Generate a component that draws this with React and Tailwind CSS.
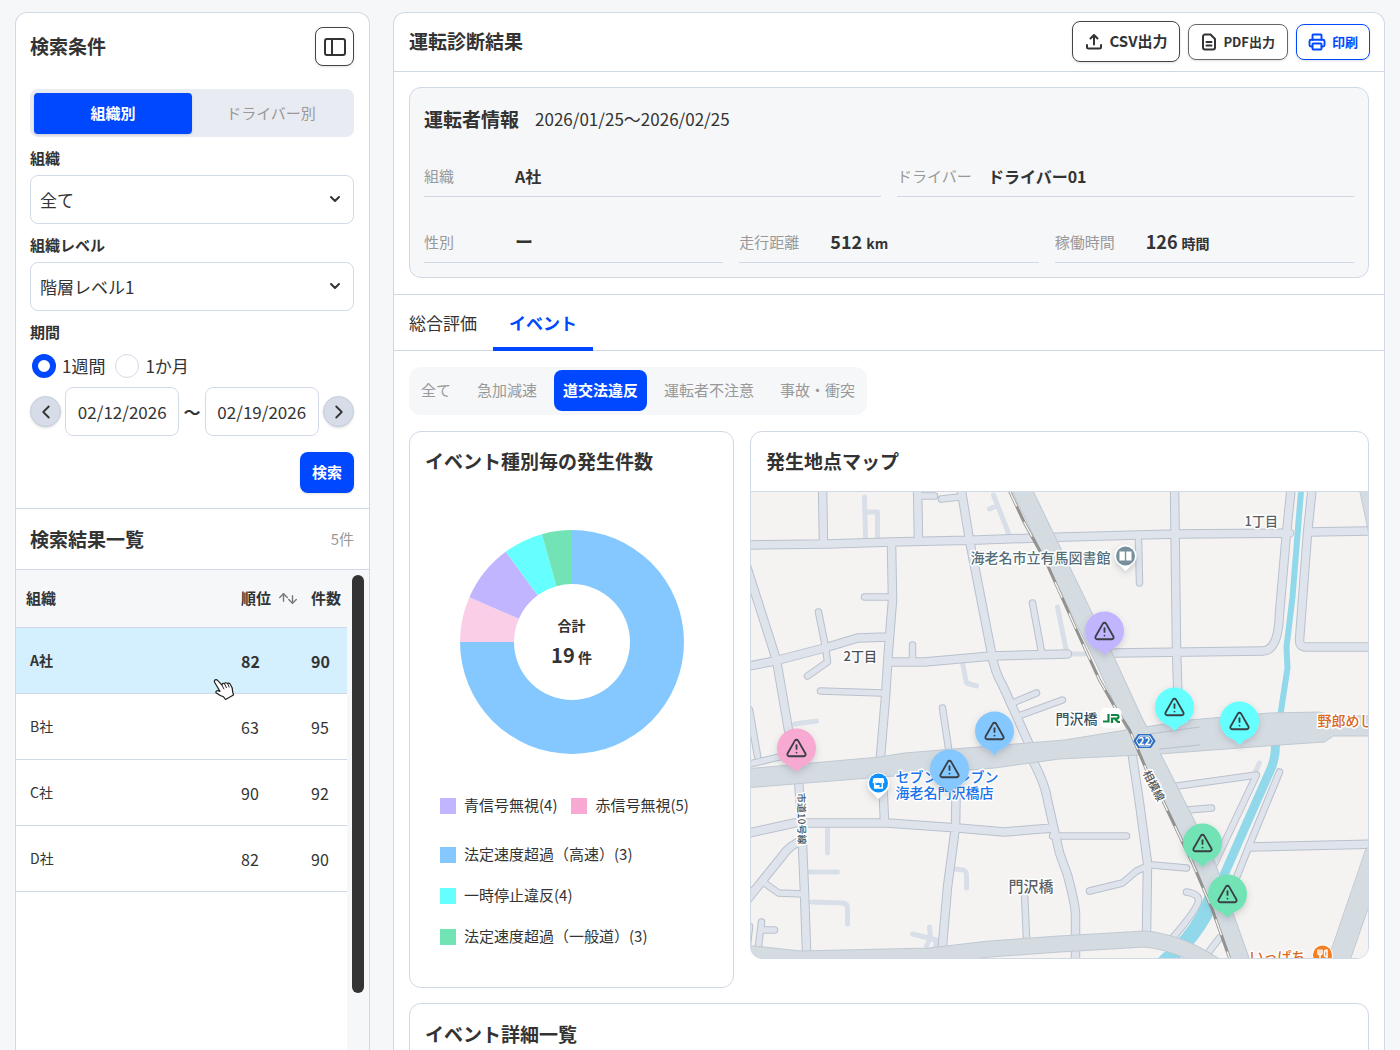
import { useState } from 'react';
import clsx from 'clsx';
import { ArrowDown, ArrowUp, ChevronDown, ChevronLeft, ChevronRight, Printer, TriangleAlert, Utensils } from 'lucide-react';

const companies = [
  { name: 'A社', rank: 82, count: 90 },
  { name: 'B社', rank: 63, count: 95 },
  { name: 'C社', rank: 90, count: 92 },
  { name: 'D社', rank: 82, count: 90 },
];

const filters = ['全て', '急加減速', '道交法違反', '運転者不注意', '事故・衝突'];

const slices = [
  { from: 0, to: 270, color: '#84c8ff' },
  { from: 270, to: 293.6, color: '#f9cee6' },
  { from: 293.6, to: 323.7, color: '#c1b5ff' },
  { from: 323.7, to: 344.4, color: '#66ffff' },
  { from: 344.4, to: 360, color: '#72e3b5' },
];

function slicePath({ from, to }) {
  const point = (deg, r) => {
    const a = ((deg - 90) * Math.PI) / 180;
    return `${112 + r * Math.cos(a)} ${112 + r * Math.sin(a)}`;
  };
  const large = to - from > 180 ? 1 : 0;
  return `M${point(from, 112)} A112 112 0 ${large} 1 ${point(to, 112)} L${point(to, 58)} A58 58 0 ${large} 0 ${point(from, 58)} Z`;
}

const lanes = [
  'M865 497L866 537M866 512H878V538',
  'M994 495L1009 533M990 509L997 506',
  'M1058 607L1067 652',
  'M1068 654H1085',
  'M963 663L967 683L977 686',
  'M828 828V853',
  'M808 872H838',
  'M812 902L844 903Q848 904 848 908V924',
  'M955 869L964 870Q967 871 967 875V888',
  'M913 934L937 940M930 927L931 938L927 946M937 940L936 946',
  'M1254 776L1260 763',
  'M795 724L817 721',
];

const streets = [
  'M865 597H890',
  'M819 612L826 647L828 662L808 676',
  'M821 691L883 693',
  'M913 645V660',
  'M1033 603L1042 652',
  'M943 708L949 748',
  'M1037 693L1013 703',
  'M1063 700L1019 716',
  'M920 496H935',
  'M960 497L942 499',
  'M1139 540L1140 583',
  'M1053 836H1127',
  'M762 922L759 946M761 930H775',
  'M750 929V926L748 945',
  'M1025 893L1027 938',
  'M1153 865L1187 868',
  'M1090 891L1123 883L1137 871L1148 866',
  'M1187 892Q1199 894 1199 900Q1199 908 1173 938',
  'M1178 786L1257 775L1212 870',
  'M1188 810L1212 808',
  'M1280 772L1252 840L1236 880',
  'M750 710L758 756',
  'M750 764L788 755',
  'M765 883L779 893L804 894',
  'M1220 938L1207 955',
];

const roads = [
  'M745 545L828 544L892 542L978 540L1065 537L1177 534L1290 533',
  'M1310 532L1375 531',
  'M823 485L824 543',
  'M918 485L919 541',
  'M961 485L970 540L992 653Q995 672 1003 685L1030 745',
  'M892 543L893 600L889 650L886 697L881 757',
  'M746 563L777 660L789 730L797 765',
  'M745 667L775 661L825 648L858 638L888 637',
  'M893 662H925L992 656L1068 654',
  'M799 780L802 820L805 893L807 950',
  'M745 834L795 823H888L958 828L1005 832L1053 828',
  'M883 775L885 822',
  'M957 770L956 827L948 887L943 945',
  'M1033 760Q1046 785 1048 800L1060 853L1068 875Q1076 905 1076 915V965',
  'M745 903L765 878L782 857Q790 845 802 841',
  'M1132 750L1140 803L1148 863L1147 932',
  'M1250 847L1375 844',
  'M1175 485L1177 650L1179 712',
  'M1292 485L1287 533L1280 613Q1279 651 1263 651L1115 653',
  'M1313 485L1308 533L1300 640Q1300 647 1306 647H1375',
];

const highway =
  'M745 769L880 757L905 753L1065 740L1120 731L1190 720L1270 713L1320 712L1335 716H1375V736H1334L1325 742L1280 745L1160 754L1060 759L995 768L745 788Z';
const diagonal =
  'M1018 480L1023 491L1082 613L1104 657L1133 720L1152 757L1184 820L1207 867L1226 920L1242 965';
const rail =
  'M1010 491L1025 523L1047 563L1065 603L1077 630L1100 680L1117 710L1130 730L1147 770L1163 800L1193 863L1213 910L1230 958';

const pins = [
  { x: 1105, y: 631, color: '#c1b5ff' },
  { x: 1175, y: 707, color: '#66ffff' },
  { x: 1240, y: 721, color: '#66ffff' },
  { x: 995, y: 731, color: '#84c8ff' },
  { x: 950, y: 769, color: '#84c8ff' },
  { x: 797, y: 748, color: '#f7a9d2' },
  { x: 1203, y: 843, color: '#72e3b5' },
  { x: 1228, y: 894, color: '#72e3b5' },
];

function UploadIcon() {
  return (
    <svg width="18" height="18" viewBox="0 0 18 18" fill="none" stroke="currentColor" strokeWidth="2" strokeLinecap="round" strokeLinejoin="round" aria-hidden="true">
      <path d="M9 11.500V2M5.500 5.500L9 2l3.500 3.500M2 12v2Q2 15.500 3.500 15.500h11Q16 15.500 16 14V12" />
    </svg>
  );
}

function DocumentIcon() {
  return (
    <svg width="16" height="18" viewBox="0 0 16 18" fill="none" stroke="currentColor" strokeWidth="2" strokeLinecap="round" strokeLinejoin="round" aria-hidden="true">
      <path d="M4 1.500h5.500L14 6v8.500a2 2 0 0 1-2 2H4a2 2 0 0 1-2-2v-11a2 2 0 0 1 2-2Z" />
      <path d="M5.500 9h5M5.500 12.500h5" />
    </svg>
  );
}

function SidebarIcon() {
  return (
    <svg width="22" height="18" viewBox="0 0 22 18" fill="none" stroke="currentColor" strokeWidth="2" aria-hidden="true">
      <rect x="1" y="1" width="20" height="16" rx="2" />
      <path d="M8 1v16" />
    </svg>
  );
}

function HandCursor() {
  return (
    <svg className="absolute right-1.5 -bottom-2 z-10" width="22" height="23" viewBox="0 0 22 23" aria-hidden="true">
      <path
        d="M1.500 2.500Q3 .8 4.800 2.600L9 7.200Q9 4.800 11.500 5.600Q12.500 4 14.600 5.400Q16.500 4.600 17.600 6.800Q20 10 19.600 13.500L20.500 17L12.500 21.500L10.500 18.800Q6.500 17.500 3 14.800Q2.500 12.600 5 12.700L7 13.400L2 5Q1 3.500 1.500 2.500Z"
        fill="#fff"
        stroke="#222"
        strokeWidth="1.200"
        strokeLinejoin="round"
      />
      <path d="M9 7.200l2 4M11.500 5.600l2 4.400M14.600 5.400l1.600 4" stroke="#222" strokeWidth="1" fill="none" />
    </svg>
  );
}

function SelectField({ id, label, options }) {
  return (
    <div>
      <label htmlFor={id} className="mt-2.5 mb-1.5 block text-[15px] leading-[22px] font-bold">
        {label}
      </label>
      <div className="relative">
        <select
          id={id}
          className="h-[49px] w-full appearance-none rounded-lg border border-[#d3daea] bg-white px-[9px] text-[17px]"
        >
          {options.map((option) => (
            <option key={option}>{option}</option>
          ))}
        </select>
        <ChevronDown className="pointer-events-none absolute top-4 right-[11px]" size={16} strokeWidth={3} />
      </div>
    </div>
  );
}

function SearchPanel() {
  return (
    <section className="pt-3.5 pr-[15px] pb-[15px] pl-3.5">
      <div className="flex items-center justify-between">
        <h2 className="text-[19px] font-bold">検索条件</h2>
        <button
          aria-label="サイドバーを閉じる"
          className="flex size-[39px] items-center justify-center rounded-lg border border-[#444] bg-white shadow-sm"
        >
          <SidebarIcon />
        </button>
      </div>

      <div className="mt-[23px] grid h-12 grid-cols-2 rounded-lg bg-[#e8ebf2] px-1 pt-1 pb-[3px] text-[15px]">
        <button className="rounded bg-[#0048ff] font-bold text-white shadow-sm">組織別</button>
        <button className="text-[#999]">ドライバー別</button>
      </div>

      <SelectField id="org" label="組織" options={['全て']} />
      <SelectField id="level" label="組織レベル" options={['階層レベル1']} />

      <fieldset className="mt-2.5">
        <legend className="text-[15px] leading-[22px] font-bold">期間</legend>
        <div className="mt-[11px] flex h-6 items-center gap-2.5 pl-0.5 text-[17px]">
          {['1週間', '1か月'].map((label, i) => (
            <label key={label} className="flex items-center gap-1.5">
              <input
                type="radio"
                name="period"
                defaultChecked={i === 0}
                className="size-6 appearance-none rounded-full border border-[#d3daea] bg-white checked:border-[6px] checked:border-[#0048ff]"
              />
              {label}
            </label>
          ))}
        </div>
      </fieldset>

      <div className="mt-[9px] flex items-center justify-between">
        <button
          aria-label="前の期間"
          className="flex size-[31px] items-center justify-center rounded-full border border-[#c5cddd] bg-[#d6dce8] shadow-sm"
        >
          <ChevronLeft size={22} />
        </button>
        <input
          aria-label="開始日"
          defaultValue="02/12/2026"
          className="h-[49px] w-[114px] rounded-lg border border-[#d3daea] text-center text-[17px]"
        />
        <span className="text-[17px] font-bold">〜</span>
        <input
          aria-label="終了日"
          defaultValue="02/19/2026"
          className="h-[49px] w-[114px] rounded-lg border border-[#d3daea] text-center text-[17px]"
        />
        <button
          aria-label="次の期間"
          className="flex size-[31px] items-center justify-center rounded-full border border-[#c5cddd] bg-[#d6dce8] shadow-sm"
        >
          <ChevronRight size={22} />
        </button>
      </div>

      <div className="mt-4 flex justify-end">
        <button className="h-[41px] rounded-lg bg-[#0048ff] px-3 text-[15px] font-bold text-white shadow-sm">検索</button>
      </div>
    </section>
  );
}

function ResultList() {
  return (
    <>
      <div className="flex h-[61px] items-center justify-between border-t border-[#d0d8e6] pr-[15px] pl-3.5">
        <h2 className="text-[19px] font-bold">検索結果一覧</h2>
        <span className="text-[15px] text-[#999]">5件</span>
      </div>
      <div className="flex flex-1 border-t border-[#d0d8e6]">
        <div className="flex-1">
          <table className="w-full table-fixed border-collapse text-left">
            <thead>
              <tr className="h-[57px] border-b border-[#d0d8e6] bg-[#f5f7f9] text-[15px]">
                <th className="pl-2.5">組織</th>
                <th className="w-[70px]">
                  <button className="flex items-center gap-1.5 font-bold">
                    順位
                    <span className="flex text-[#777]">
                      <ArrowUp size={13} strokeWidth={2.5} className="-mr-1 -translate-y-px" />
                      <ArrowDown size={13} strokeWidth={2.5} className="translate-y-px" />
                    </span>
                  </button>
                </th>
                <th className="w-9 whitespace-nowrap">件数</th>
              </tr>
            </thead>
            <tbody>
              {companies.map((c, i) => (
                <tr
                  key={c.name}
                  className={clsx('h-[66px] border-b border-[#d0d8e6] text-[16px]', i === 0 && 'bg-[#d4f0ff] font-bold')}
                >
                  <td className="relative pl-3.5 text-[14px]">
                    {c.name}
                    {i === 0 && <HandCursor />}
                  </td>
                  <td className="pt-0.5">{c.rank}</td>
                  <td className="pt-0.5">{c.count}</td>
                </tr>
              ))}
            </tbody>
          </table>
        </div>
        <div className="w-[22px] bg-[#f5f7f9] px-[5px] pt-[5px]">
          <div className="h-[418px] rounded-full bg-[#333]" />
        </div>
      </div>
    </>
  );
}

function InfoItem({ label, children }) {
  return (
    <div className="flex h-10 items-center gap-[13px] border-b border-[#d0d8e6]">
      <dt className="min-w-[78px] text-[15px] text-[#999]">{label}</dt>
      <dd className="pb-0.5 font-bold">{children}</dd>
    </div>
  );
}

function DriverInfo() {
  return (
    <section className="mx-[15px] mt-[15px] mb-4 rounded-xl border border-[#d0d8e6] bg-[#f5f7f9] px-3.5 pb-3.5">
      <div className="flex h-[62px] items-center gap-4">
        <h3 className="text-[19px] font-bold">運転者情報</h3>
        <p className="text-[17px]">2026/01/25〜2026/02/25</p>
      </div>
      <dl className="mt-[7px] grid grid-cols-2 gap-4 text-[16px]">
        <InfoItem label="組織">A社</InfoItem>
        <InfoItem label="ドライバー">ドライバー01</InfoItem>
      </dl>
      <dl className="mt-[26px] grid grid-cols-3 gap-4 text-[18px]">
        <InfoItem label="性別">ー</InfoItem>
        <InfoItem label="走行距離">
          512 <span className="text-[14px]">km</span>
        </InfoItem>
        <InfoItem label="稼働時間">
          126 <span className="text-[14px]">時間</span>
        </InfoItem>
      </dl>
    </section>
  );
}

function LegendItem({ color, children }) {
  return (
    <li className="flex h-[41px] items-center gap-2">
      <span className={clsx('size-4', color)} />
      {children}
    </li>
  );
}

function EventChart() {
  return (
    <section className="w-[325px] shrink-0 rounded-xl border border-[#d0d8e6] pb-[30px]">
      <h3 className="flex h-[58px] items-center px-[15px] text-[19px] font-bold">イベント種別毎の発生件数</h3>
      <div className="relative mx-auto mt-10 size-56">
        <svg viewBox="0 0 224 224" className="size-full" aria-hidden="true">
          {slices.map((slice) => (
            <path key={slice.from} d={slicePath(slice)} fill={slice.color} />
          ))}
        </svg>
        <div className="absolute inset-0 flex flex-col items-center justify-center pt-1 text-[14px] font-bold">
          <span className="leading-5">合計</span>
          <span className="mt-1 leading-8">
            <span className="text-[20px]">19</span> 件
          </span>
        </div>
      </div>
      <ul className="mt-[31px] pl-[30px] text-[15px]">
        <li>
          <ul className="mb-2 flex gap-3.5">
            <LegendItem color="bg-[#c1b5ff]">青信号無視(4)</LegendItem>
            <LegendItem color="bg-[#f7a9d2]">赤信号無視(5)</LegendItem>
          </ul>
        </li>
        <LegendItem color="bg-[#84c8ff]">法定速度超過（高速）(3)</LegendItem>
        <LegendItem color="bg-[#66ffff]">一時停止違反(4)</LegendItem>
        <LegendItem color="bg-[#72e3b5]">法定速度超過（一般道）(3)</LegendItem>
      </ul>
    </section>
  );
}

function TownMap() {
  return (
    <svg
      viewBox="751 492 618 466"
      preserveAspectRatio="xMidYMid slice"
      className="h-[466px] w-full bg-[#f4f3f1]"
      role="img"
      aria-label="発生地点マップ"
    >
      <defs>
        <filter id="pin-shadow" x="-50%" y="-50%" width="200%" height="200%">
          <feDropShadow dx="0" dy="3" stdDeviation="3" floodColor="#556" floodOpacity="0.25" />
        </filter>
      </defs>

      <g fill="none" strokeLinecap="round" strokeLinejoin="round">
        <path d={lanes.join('')} stroke="#d9dfe8" strokeWidth="5" />
        <path d={streets.join('')} stroke="#b9c1cd" strokeWidth="7.500" />
        <path d={roads.join('')} stroke="#b9c1cd" strokeWidth="9.500" />
        <path d={streets.join('')} stroke="#dfe4ec" strokeWidth="5.500" />
        <path d={roads.join('')} stroke="#dfe4ec" strokeWidth="7.500" />
        <path d="M1302 485L1293 597L1287 647L1288 668L1281 714" stroke="#90d8ea" strokeWidth="6" />
        <path d="M1276 745Q1276 760 1270 772L1250 817L1224 876" stroke="#90d8ea" strokeWidth="9" />
        <path d="M1218 885L1205 915Q1190 942 1165 962" stroke="#90d8ea" strokeWidth="15" />
        <path d="M745 953L800 959L930 956L990 949L1060 944L1145 939Q1180 942 1216 966" stroke="#c0c9d2" strokeWidth="17" />
        <path d="M745 953L800 959L930 956L990 949L1060 944L1145 939Q1180 942 1216 966" stroke="#d4dbe1" strokeWidth="15" />
        <path d={diagonal} stroke="#c0c9d2" strokeWidth="20" />
        <path d={highway} fill="#d4dbe1" stroke="#c0c9d2" />
        <path d={diagonal} stroke="#d4dbe1" strokeWidth="18" />
        <path d="M1360 488L1375 488V560Z" fill="#d4dbe1" stroke="#c0c9d2" />
        <path d="M1367 848H1375V890L1350 962H1328Z" fill="#d4dbe1" stroke="#c0c9d2" />
        <path d="M1150 734L1200 727M1160 749L1200 745" stroke="#b9c1cd" />
        <path d={rail} stroke="#92928e" strokeWidth="3" strokeLinecap="butt" />
        <path d={rail} stroke="#f1f1ef" strokeWidth="1.500" strokeLinecap="butt" strokeDasharray="17 17" />
      </g>

      <g fontSize="14" fontWeight="500" stroke="#fff" strokeWidth="3" strokeLinejoin="round" paintOrder="stroke">
        <text x="971" y="563" fill="#546e7a">海老名市立有馬図書館</text>
        <text x="1245" y="526" fontSize="13" fill="#5b6066">1丁目</text>
        <text x="844" y="661" fontSize="13" fill="#4a4f55">2丁目</text>
        <text x="1056" y="724" fill="#37505c">門沢橋</text>
        <text x="1009" y="892" fontSize="15" fill="#5b6066">門沢橋</text>
        <text x="896" y="782" fill="#1a73e8">セブン-イレブン</text>
        <text x="896" y="798" fill="#1a73e8">海老名門沢橋店</text>
        <text x="1318" y="726" fill="#d9691e">野郎めし</text>
        <text x="1250" y="962" fill="#d9691e">いっぱち</text>
        <text x="0" y="0" fontSize="11" fill="#555" transform="translate(1143 773) rotate(62)">相模線</text>
        <text x="0" y="0" fontSize="10" fill="#4a5560" transform="translate(798 793) rotate(89)">市道10号線</text>
      </g>

      {/* library */}
      <path d="M1126 571l-6-6a11 11 0 1 1 12 0Z" fill="#fff" filter="url(#pin-shadow)" />
      <circle cx="1126" cy="556" r="9.500" fill="#78909c" />
      <path d="M1120 551.500h5.300v9H1120ZM1126.700 551.500h5.300v9h-5.300Z" fill="#fff" />

      {/* convenience store */}
      <path d="M879 799l-6-6a11 11 0 1 1 12 0Z" fill="#fff" filter="url(#pin-shadow)" />
      <circle cx="879" cy="783" r="9.500" fill="#0b91ff" />
      <path d="M874 778h10l1 4.500q-1 1.500-2.500 0q-1.700 1.500-3.500 0q-1.700 1.500-3.500 0q-1.500 1.500-2.500 0Z" fill="#fff" />
      <path d="M875.200 783v5h7.600v-5" fill="none" stroke="#fff" strokeWidth="1.500" />
      <path d="M875 785h5v3h-5Z" fill="#fff" />

      {/* restaurant */}
      <circle cx="1323" cy="955" r="10.500" fill="#fff" />
      <circle cx="1323" cy="955" r="9.500" fill="#f47f22" />
      <Utensils x="1317" y="949" width="12" height="12" color="#fff" strokeWidth={3} />

      {/* station logo */}
      <rect x="1101" y="708" width="21" height="20" rx="5" fill="#fff" />
      <path
        d="M1103.500 721.500h5.500v-7.500M1112.500 723v-4.500h5q1.500 0 1.500-1.700t-1.500-1.800h-6M1115.500 719l3 3h2"
        fill="none"
        stroke="#118544"
        strokeWidth="2.200"
      />

      {/* route shield */}
      <path d="M1139 735h12l4 6-4 6h-12l-4-6Z" fill="#2f6fc4" stroke="#2f6fc4" strokeWidth="2" strokeLinejoin="round" />
      <path d="M1140 736h10l3 5-3 5h-10l-3-5Z" fill="none" stroke="#fff" strokeWidth="1" />
      <text x="1145" y="745" textAnchor="middle" fontSize="10" fontWeight="700" fill="#fff">22</text>

      {pins.map((pin) => (
        <g key={`${pin.x}-${pin.y}`} filter="url(#pin-shadow)">
          <path d={`M${pin.x - 8} ${pin.y + 16}h16l-8 8Z`} fill={pin.color} />
          <circle cx={pin.x} cy={pin.y} r="19.500" fill={pin.color} />
        </g>
      ))}
      {pins.map((pin) => (
        <TriangleAlert key={`${pin.x}-${pin.y}`} x={pin.x - 11} y={pin.y - 11} width="22" height="22" color="#3a3f45" />
      ))}
    </svg>
  );
}

export default function App() {
  const [filter, setFilter] = useState('道交法違反');

  return (
    <div className="flex h-screen gap-[23px] overflow-hidden bg-[#f5f7f9] px-[15px] pt-3 font-['Noto_Sans_CJK_JP',sans-serif] text-[#333]">
      <aside className="flex w-[355px] shrink-0 flex-col rounded-t-xl border border-b-0 border-[#d0d8e6] bg-white">
        <SearchPanel />
        <ResultList />
      </aside>

      <main className="min-w-0 flex-1 overflow-hidden rounded-t-xl border border-b-0 border-[#d0d8e6] bg-white">
        <header className="flex h-[59px] items-center justify-between border-b border-[#d0d8e6] pr-3.5 pb-px pl-[15px]">
          <h1 className="text-[19px] font-bold">運転診断結果</h1>
          <div className="flex items-center gap-2">
            <button className="flex h-[41px] items-center gap-1.5 rounded-lg border border-[#444] px-3 text-[15px] font-bold shadow">
              <UploadIcon />
              CSV出力
            </button>
            <button className="flex h-9 items-center gap-1.5 rounded-lg border border-[#666] px-3 text-[13px] font-bold shadow">
              <DocumentIcon />
              PDF出力
            </button>
            <button className="flex h-9 items-center gap-1.5 rounded-lg border border-[#0048ff] px-[11px] text-[13px] font-bold text-[#0048ff] shadow">
              <Printer size={18} strokeWidth={2.5} />
              印刷
            </button>
          </div>
        </header>

        <DriverInfo />

        <nav className="flex h-[57px] gap-4 border-y border-[#d0d8e6] px-[15px] text-[17px]">
          <button>総合評価</button>
          <button className="-mb-px border-b-4 border-[#0048ff] px-4 pt-1 font-bold text-[#0048ff]">イベント</button>
        </nav>

        <div className="px-[15px] pt-4">
          <div className="inline-flex h-12 gap-2 rounded-xl bg-[#f5f7f9] px-[3px] pt-[3px] pb-1 text-[15px]">
            {filters.map((name) => (
              <button
                key={name}
                onClick={() => setFilter(name)}
                className={clsx('rounded-lg px-[9px]', name === filter ? 'bg-[#0048ff] font-bold text-white' : 'text-[#999]')}
              >
                {name}
              </button>
            ))}
          </div>

          <div className="mt-4 flex items-start gap-4">
            <EventChart />
            <section className="min-w-0 flex-1 overflow-hidden rounded-xl border border-[#d0d8e6]">
              <h3 className="flex h-[60px] items-center border-b border-[#d0d8e6] px-[15px] text-[19px] font-bold">
                発生地点マップ
              </h3>
              <TownMap />
            </section>
          </div>

          <section className="mt-[15px] rounded-xl border border-[#d0d8e6] pb-10">
            <h3 className="flex h-[60px] items-center px-[15px] text-[19px] font-bold">イベント詳細一覧</h3>
          </section>
        </div>
      </main>
    </div>
  );
}
